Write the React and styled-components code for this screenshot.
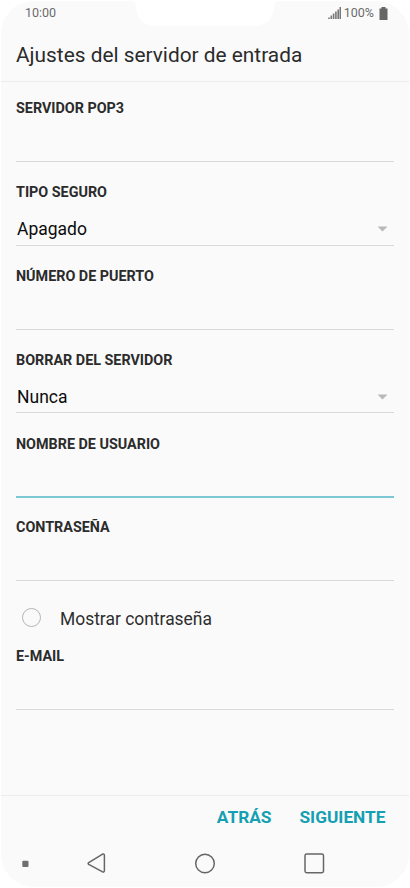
import styled, { createGlobalStyle } from "styled-components";

const GlobalStyle = createGlobalStyle`
    * {
        box-sizing: border-box;
    }
    body {
        margin: 0;
        background: #ffffff;
        font-family: Roboto, sans-serif;
    }
`;

const fields = [
    { label: "SERVIDOR POP3" },
    { label: "TIPO SEGURO", value: "Apagado" },
    { label: "NÚMERO DE PUERTO" },
    { label: "BORRAR DEL SERVIDOR", value: "Nunca" },
    { label: "NOMBRE DE USUARIO", active: true },
    { label: "CONTRASEÑA" },
];

function App() {
    return (
        <>
        <GlobalStyle />
        <StyledPhone>
            <StatusBar />
            <StyledHeader>
                <h1>Ajustes del servidor de entrada</h1>
            </StyledHeader>
            <StyledForm>
                {fields.map((field) => (
                    <Field key={field.label} {...field} />
                ))}
                <StyledCheck>
                    <span className="circle" />
                    <span>Mostrar contraseña</span>
                </StyledCheck>
                <Field label="E-MAIL" compact />
            </StyledForm>
            <StyledActions>
                <StyledAction>ATRÁS</StyledAction>
                <StyledAction>SIGUIENTE</StyledAction>
            </StyledActions>
            <NavBar />
        </StyledPhone>
        </>
    )
}

export default App


const StyledPhone = styled.div`
    position: relative;
    display: flex;
    flex-direction: column;
    width: 408px;
    height: 886px;
    margin: 1px;
    border-radius: 33px;
    overflow: hidden;
    background: #fafafa;
`;

const StyledStatusBar = styled.div`
    display: flex;
    justify-content: space-between;
    height: 25px;
    padding: 0 21px 0 24px;
    font-size: 12.5px;
    line-height: 24px;
    color: #6b6b6b;

    .notch {
        position: absolute;
        top: 0;
        left: 127px;
    }
    .indicators {
        display: flex;
        align-items: center;
        height: 24px;
    }
    .percent {
        margin: 0 5px 0 3px;
    }
    svg {
        display: block;
    }
`;

function StatusBar() {
    return (
        <StyledStatusBar>
            <span>10:00</span>
            <svg className="notch" width="154" height="25" viewBox="0 0 154 25">
                <path d="M0 0H3Q7 0 7.5 4C8.500 17 15 25 27 25H127C139 25 145.500 17 146.500 4Q147 0 151 0Z" fill="#fff" />
            </svg>
            <div className="indicators">
                <svg width="13" height="12" viewBox="0 0 13 12">
                    <path d="M1 12V10.500M3.300 12V8.500M5.600 12V6.500M7.900 12V4.500M10.200 12V2.500M12.300 12V0" stroke="#777" strokeWidth="1.600" />
                </svg>
                <span className="percent">100%</span>
                <svg width="9" height="13" viewBox="0 0 9 13">
                    <path d="M2.500 0H6.500V1.500H8.500V13H0.500V1.500H2.500Z" fill="#666" />
                </svg>
            </div>
        </StyledStatusBar>
    )
}

const StyledHeader = styled.header`
    height: 56px;
    padding-left: 15px;
    border-bottom: 1px solid #ececec;

    h1 {
        margin: 0;
        font-size: 20.85px;
        font-weight: 400;
        line-height: 58px;
        color: #2b2b2b;
    }
`;

const StyledForm = styled.main`
    flex: 1;
    padding: 0 15px;
`;

const StyledField = styled.section`
    height: ${(props) => (props.$compact ? "71.500px" : props.$active ? "84.750px" : "83.750px")};
    margin-bottom: ${(props) => (props.$active ? "-1px" : "0")};
    display: flex;
    flex-direction: column;
    justify-content: space-between;
    padding-top: ${(props) => (props.$compact ? "10px" : "22.400px")};
    border-bottom: ${(props) => (props.$active ? "2px solid #7bc7d3" : "1px solid #d9d9d9")};

    &:first-child {
        height: 80px;
        padding-top: 18px;
    }
    h2 {
        margin: 0;
        font-size: 14.35px;
        font-weight: 700;
        line-height: 18px;
        color: #2b2b2b;
    }
    .value {
        display: flex;
        align-items: center;
        justify-content: space-between;
        height: 33px;
        padding: 1.5px 6px 0 1px;
        font-size: 17.5px;
        line-height: 22px;
        color: #0c0c0c;
    }
`;

function Field(props) {
    return (
        <StyledField $active={props.active} $compact={props.compact}>
            <h2>{props.label}</h2>
            {props.value && (
                <div className="value">
                    <span>{props.value}</span>
                    <svg width="11" height="6" viewBox="0 0 11 6">
                        <path d="M0.500 0.500H10.500L5.500 5.500Z" fill="#b9b9b9" />
                    </svg>
                </div>
            )}
        </StyledField>
    )
}

const StyledCheck = styled.label`
    display: flex;
    align-items: center;
    gap: 19px;
    height: 57.5px;
    padding: 18px 0 0 6px;
    font-size: 17.45px;
    line-height: 40px;
    color: #2e2e2e;

    .circle {
        width: 19px;
        height: 19px;
        margin-bottom: 3px;
        border: 1.5px solid #b5b5b5;
        border-radius: 50%;
    }
`;

const StyledActions = styled.footer`
    display: flex;
    justify-content: flex-end;
    gap: 28px;
    height: 44px;
    padding-right: 23.5px;
    border-top: 1px solid #ececec;
`;

const StyledAction = styled.button`
    padding: 0;
    border: 0;
    background: none;
    font-family: inherit;
    font-size: 17.3px;
    font-weight: 700;
    line-height: 41px;
    color: #149fb2;
`;

const StyledNavBar = styled.nav`
    height: 48px;

    svg {
        display: block;
    }
`;

function NavBar() {
    return (
        <StyledNavBar>
            <svg width="408" height="48" viewBox="0 0 408 48" fill="none" stroke="#666" strokeWidth="1.500" strokeLinejoin="round">
                <rect x="21.300" y="21.800" width="6.200" height="6.200" rx="1" fill="#707070" stroke="none" />
                <path d="M87.700 23.600L101.200 15.300Q103.400 14.400 103.400 16.500V31.500Q103.400 33.700 101.200 32.700L87.700 25.400Q86.500 24.500 87.700 23.600Z" />
                <circle cx="204" cy="24.500" r="9.300" />
                <rect x="304" y="15" width="18.500" height="18.700" rx="1.700" />
            </svg>
        </StyledNavBar>
    )
}
